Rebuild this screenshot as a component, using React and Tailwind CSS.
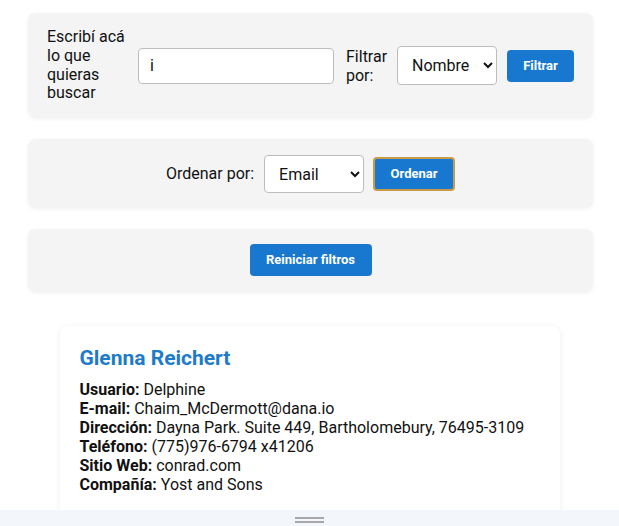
import React, { useState } from 'react';

const user = {
    name: 'Glenna Reichert',
    username: 'Delphine',
    email: 'Chaim_McDermott@dana.io',
    address: 'Dayna Park. Suite 449, Bartholomebury, 76495-3109',
    phone: '(775)976-6794 x41206',
    website: 'conrad.com',
    company: 'Yost and Sons',
};

const App = () => {
    const [query, setQuery] = useState('i');
    const [filterBy, setFilterBy] = useState('name');
    const [sortBy, setSortBy] = useState('email');

    return (
        <div className="min-h-[526px] bg-white text-[#111] font-['Roboto','Liberation_Sans',sans-serif]">
            <div className="px-[28px] pt-[13px] pr-[26px] flex flex-col gap-[21px]">
                {/* Filtro */}
                <div className="bg-[#f4f4f4] rounded-lg shadow-[0_1px_4px_rgba(0,0,0,0.06)] pl-[19px] py-[15px] flex items-center">
                    <label className="w-[82px] text-base leading-[18.75px]">Escribí acá lo que quieras buscar</label>
                    <input
                        type="text"
                        value={query}
                        onChange={e => setQuery(e.target.value)}
                        className="ml-[9px] w-[196px] h-[36px] bg-white border border-[#bdbdbd] rounded px-[11px] text-base outline-none"
                    />
                    <label className="ml-[12px] w-[42px] text-base leading-[19px]">Filtrar por:</label>
                    <select
                        value={filterBy}
                        onChange={e => setFilterBy(e.target.value)}
                        className="ml-[9px] w-[100px] h-[39px] bg-white border border-[#bdbdbd] rounded px-[10px] text-base"
                    >
                        <option value="name">Nombre</option>
                        <option value="email">Email</option>
                    </select>
                    <button className="ml-[10px] w-[67px] h-[32px] bg-[#1878d0] text-white text-[13px] font-bold rounded">
                        Filtrar
                    </button>
                </div>

                {/* Orden */}
                <div className="bg-[#f4f4f4] rounded-lg shadow-[0_1px_4px_rgba(0,0,0,0.06)] pt-[16px] pb-[15px] flex items-center justify-center">
                    <span className="text-base">Ordenar por:</span>
                    <select
                        value={sortBy}
                        onChange={e => setSortBy(e.target.value)}
                        className="ml-[10px] w-[100px] h-[38px] bg-white border border-[#bdbdbd] rounded px-[10px] text-base"
                    >
                        <option value="name">Nombre</option>
                        <option value="email">Email</option>
                    </select>
                    <button className="ml-[9px] w-[82px] h-[34px] bg-[#1878d0] text-white text-[13px] font-bold rounded border-2 border-[#c99a4a]">
                        Ordenar
                    </button>
                </div>

                {/* Reiniciar */}
                <div className="bg-[#f4f4f4] rounded-lg shadow-[0_1px_4px_rgba(0,0,0,0.06)] pt-[15px] pb-[16px] flex justify-center">
                    <button className="w-[122px] h-[32px] bg-[#1878d0] text-white text-[13px] font-bold rounded">
                        Reiniciar filtros
                    </button>
                </div>
            </div>

            {/* Tarjeta */}
            <div className="mt-[34px] flex justify-center">
                <div className="w-[500px] bg-white rounded-lg shadow-[0_1px_6px_rgba(0,0,0,0.07)] px-[20px] pt-[20px] pb-[24px]">
                    <h2 className="text-[21px] leading-[24px] font-bold text-[#1e7bc9]">{user.name}</h2>
                    <div className="mt-[10px] text-base leading-[19px]">
                        <p><b>Usuario:</b> {user.username}</p>
                        <p><b>E-mail:</b> {user.email}</p>
                        <p><b>Dirección:</b> {user.address}</p>
                        <p><b>Teléfono:</b> {user.phone}</p>
                        <p><b>Sitio Web:</b> {user.website}</p>
                        <p><b>Compañía:</b> {user.company}</p>
                    </div>
                </div>
            </div>

            {/* Barra inferior */}
            <div className="fixed bottom-0 left-0 right-0 h-[16px] bg-[#f3f7fb] flex flex-col items-center pt-[7px] gap-[2px]">
                <div className="w-[29px] h-[2px] bg-[#a8a8a8]"></div>
                <div className="w-[29px] h-[2px] bg-[#a8a8a8]"></div>
            </div>
        </div>
    );
};

export default App;
